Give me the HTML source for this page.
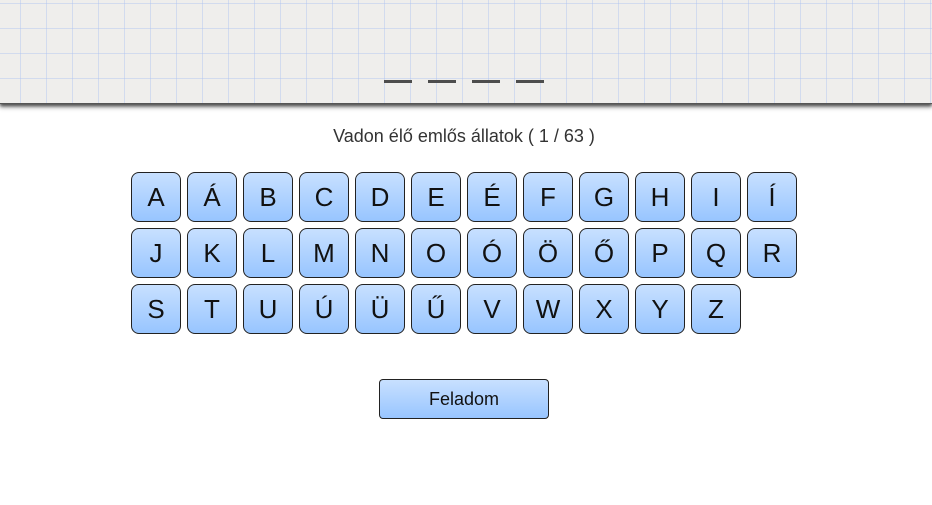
<!DOCTYPE html>
<html><head><meta charset="utf-8"><style>
body{margin:0;width:932px;height:505px;background:#fff;font-family:"Liberation Sans",sans-serif;position:relative;overflow:hidden}
.paper{position:absolute;left:0;top:0;width:932px;height:103px;background-color:#efeeec;
background-image:linear-gradient(to right,rgba(175,195,240,.45) 1px,transparent 1px),linear-gradient(to bottom,rgba(175,195,240,.45) 1px,transparent 1px);
background-size:26px 25px;background-position:20px 3px;box-shadow:0 2px 3px rgba(0,0,0,.6),0 4px 4px rgba(0,0,0,.25);border-bottom:1px solid #555}
.d{position:absolute;top:80px;width:28px;height:3px;background:#4d4d4d}
.t{position:absolute;top:126px;left:0;width:928px;text-align:center;font-size:18px;color:#333}
.k{position:absolute;width:48px;height:48px;border:1px solid #222;border-radius:8px;background:linear-gradient(#c8e0ff,#98c5ff);font-size:26px;text-align:center;line-height:48px;color:#111}
.f{position:absolute;left:379px;top:379px;width:168px;height:38px;border:1px solid #222;border-radius:4px;background:linear-gradient(#c8e0ff,#98c5ff);font-size:18px;text-align:center;line-height:38px;color:#111}
</style></head><body>
<div class="paper"></div>
<div class="d" style="left:384px"></div><div class="d" style="left:428px"></div><div class="d" style="left:472px"></div><div class="d" style="left:516px"></div>
<div class="t">Vadon élő emlős állatok ( 1 / 63 )</div>
<div id="kb"></div>
<div class="f">Feladom</div>
<script>
var rows=[["A","Á","B","C","D","E","É","F","G","H","I","Í"],["J","K","L","M","N","O","Ó","Ö","Ő","P","Q","R"],["S","T","U","Ú","Ü","Ű","V","W","X","Y","Z"]];
var h="";rows.forEach(function(r,i){r.forEach(function(c,j){h+='<div class="k" style="left:'+(131+56*j)+'px;top:'+(172+56*i)+'px">'+c+'</div>';});});
document.getElementById("kb").innerHTML=h;
</script>
</body></html>
